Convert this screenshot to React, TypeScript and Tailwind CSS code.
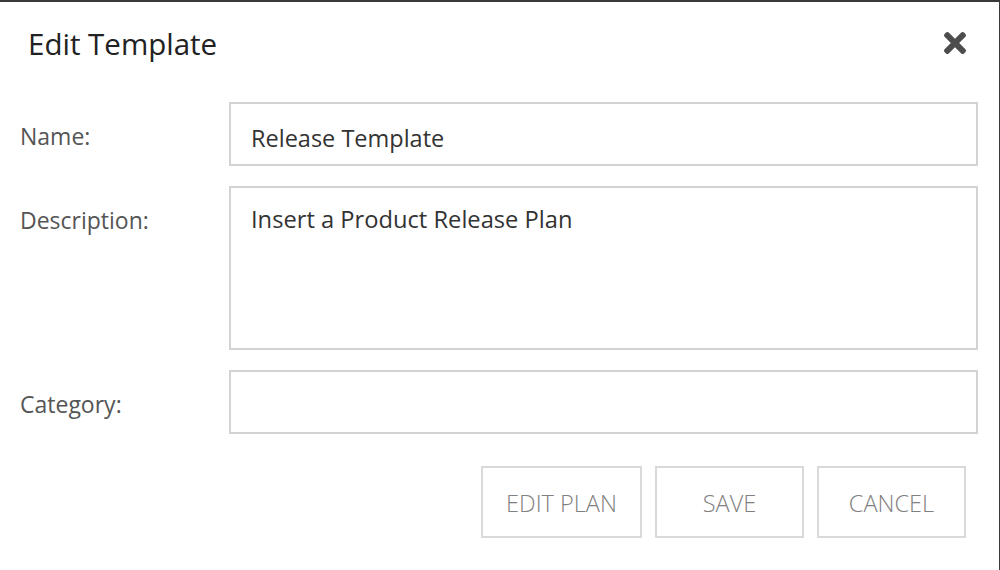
import React from "react";

function CloseIcon() {
  return (
    <svg viewBox="0 80 352 352" className="w-[22px] h-[22px] fill-[#4d4d4d]">
      <path d="M242.72 256l100.07-100.07c12.28-12.28 12.28-32.19 0-44.48l-22.24-22.24c-12.28-12.28-32.19-12.28-44.48 0L176 189.28 75.93 89.21c-12.28-12.28-32.19-12.28-44.48 0L9.21 111.45c-12.28 12.28-12.28 32.19 0 44.48L109.28 256 9.21 356.07c-12.28 12.28-12.28 32.19 0 44.48l22.24 22.24c12.28 12.28 32.2 12.28 44.48 0L176 322.72l100.07 100.07c12.28 12.28 32.2 12.28 44.48 0l22.24-22.24c12.28-12.28 12.28-32.19 0-44.48L242.72 256z" />
    </svg>
  );
}

function Label({ children }: { children: React.ReactNode }) {
  return (
    <label className="pt-[19px] text-[23px] leading-[31px] text-[#555]">
      {children}
    </label>
  );
}

function Botao({ texto, largura }: { texto: string; largura: string }) {
  return (
    <button
      className={`${largura} h-[72px] pt-[3px] border-2 border-[#d9d9d9] bg-white text-[23.5px] font-light text-[#808080] uppercase flex items-center justify-center`}
    >
      {texto}
    </button>
  );
}

export default function App() {
  return (
    <div className="h-[570px] bg-white border-t-2 border-r border-[#3a3a3a] font-['Open_Sans',sans-serif] overflow-hidden">
      <header className="pt-[21px] pl-[28px] pr-[33px] flex justify-between items-start">
        <h1 className="text-[29.5px] leading-[41px] text-[#222]">Edit Template</h1>
        <button className="mt-[9px]">
          <CloseIcon />
        </button>
      </header>

      <form className="mt-[38px] pl-[20px] pr-[21px]">
        <div className="grid grid-cols-[209px_1fr] gap-y-[20px]">
          <Label>Name:</Label>
          <input
            defaultValue="Release Template"
            className="h-[64px] border-2 border-[#d3d3d3] px-5 pt-2 text-[23.5px] leading-[31px] text-[#333] outline-none"
          />

          <Label>Description:</Label>
          <textarea
            defaultValue="Insert a Product Release Plan"
            className="h-[164px] border-2 border-[#d3d3d3] px-5 pt-4 text-[23.7px] leading-[31px] text-[#333] resize-none outline-none"
          />

          <Label>Category:</Label>
          <input
            defaultValue=""
            className="h-[64px] border-2 border-[#d3d3d3] px-5 pt-2 text-[23.5px] leading-[31px] text-[#333] outline-none"
          />
        </div>

        <div className="mt-[32px] pr-[12px] flex justify-end gap-[13px]">
          <Botao texto="Edit Plan" largura="w-[161px]" />
          <Botao texto="Save" largura="w-[149px]" />
          <Botao texto="Cancel" largura="w-[149px]" />
        </div>
      </form>
    </div>
  );
}
